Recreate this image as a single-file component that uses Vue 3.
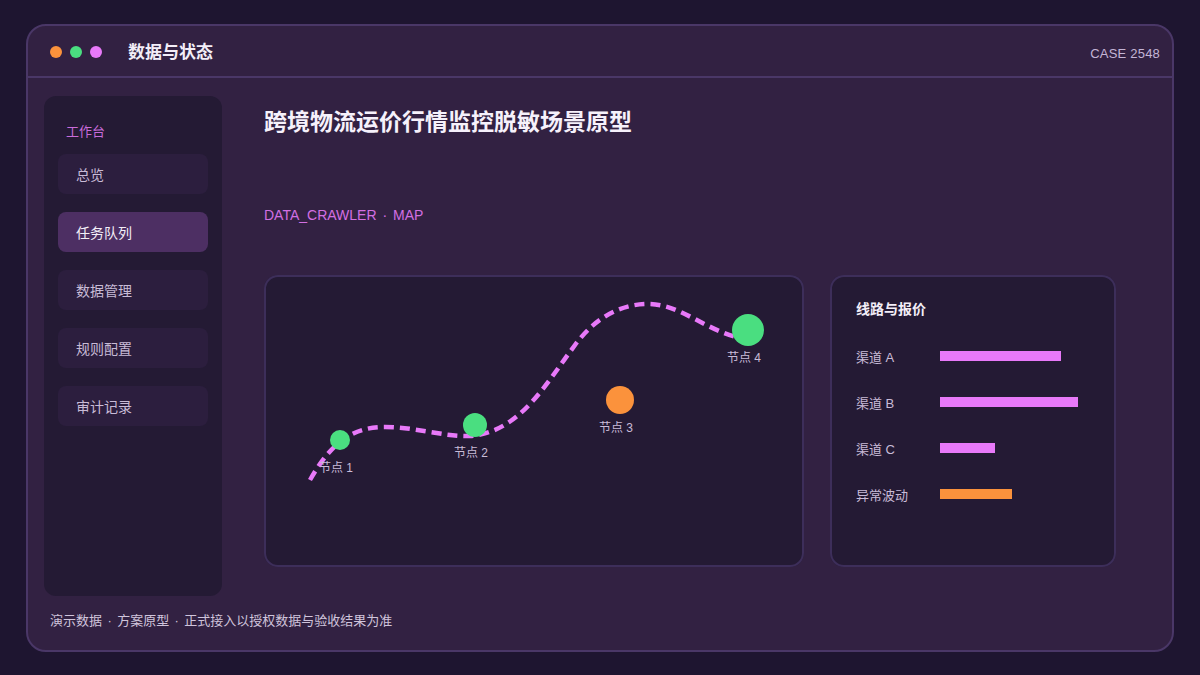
<script setup>
const navItems = [
  { label: '总览', active: false },
  { label: '任务队列', active: true },
  { label: '数据管理', active: false },
  { label: '规则配置', active: false },
  { label: '审计记录', active: false },
]
const nodes = [
  { label: '节点 1', x: 76, y: 165, r: 10, color: '#4ade80', ly: 185 },
  { label: '节点 2', x: 211, y: 150, r: 12, color: '#4ade80', ly: 170 },
  { label: '节点 3', x: 356, y: 125, r: 14, color: '#fb923c', ly: 145 },
  { label: '节点 4', x: 484, y: 55, r: 16, color: '#4ade80', ly: 75 },
]
const bars = [
  { label: '渠道 A', width: 121, color: '#e879f9' },
  { label: '渠道 B', width: 138, color: '#e879f9' },
  { label: '渠道 C', width: 55, color: '#e879f9' },
  { label: '异常波动', width: 72, color: '#fb923c' },
]
</script>

<template>
  <div class="page">
    <div class="window">
      <header class="titlebar">
        <div class="dots">
          <span class="dot orange"></span>
          <span class="dot green"></span>
          <span class="dot pink"></span>
        </div>
        <div class="app-title">数据与状态</div>
        <div class="case">CASE 2548</div>
      </header>
      <div class="body">
        <aside class="sidebar">
          <div class="side-label">工作台</div>
          <div
            v-for="item in navItems"
            :key="item.label"
            class="nav-item"
            :class="{ active: item.active }"
          >{{ item.label }}</div>
        </aside>
        <main class="main">
          <h1 class="headline">跨境物流运价行情监控脱敏场景原型</h1>
          <div class="sub">DATA_CRAWLER · MAP</div>
          <div class="panels">
            <section class="map">
              <svg class="map-svg" width="540" height="292" viewBox="0 0 540 292">
                <path
                  class="route"
                  d="M46 205 C66 170 86 152 121 152 C151 152 181 162 206 161 C256 157 281 110 311 70 C331 43 356 29 384 29 C416 29 441 55 476 63"
                />
                <circle
                  v-for="n in nodes"
                  :key="n.label"
                  :cx="n.x"
                  :cy="n.y"
                  :r="n.r"
                  :fill="n.color"
                />
              </svg>
              <span
                v-for="n in nodes"
                :key="n.label + 't'"
                class="node-label"
                :style="{ left: n.x - 21 + 'px', top: n.ly + 'px' }"
              >{{ n.label }}</span>
            </section>
            <section class="quotes">
              <h2 class="quotes-title">线路与报价</h2>
              <div class="rows">
                <div v-for="b in bars" :key="b.label" class="row">
                  <span class="row-label">{{ b.label }}</span>
                  <span class="bar" :style="{ width: b.width + 'px', background: b.color }"></span>
                </div>
              </div>
            </section>
          </div>
        </main>
      </div>
      <footer class="footer">演示数据 · 方案原型 · 正式接入以授权数据与验收结果为准</footer>
    </div>
  </div>
</template>

<style>
html, body { margin: 0; background: #1e1530; }
</style>

<style scoped>
.page {
  width: 1200px;
  height: 675px;
  box-sizing: border-box;
  padding: 24px 26px;
  background: #1e1530;
  font-family: "Liberation Sans", "Noto Sans CJK SC", sans-serif;
  overflow: hidden;
}
.window {
  height: 628px;
  box-sizing: border-box;
  background: #322142;
  border: 2px solid #4a3767;
  border-radius: 20px;
  display: flex;
  flex-direction: column;
}
.titlebar {
  height: 52px;
  box-sizing: border-box;
  flex: none;
  display: flex;
  align-items: center;
  padding: 2px 12px 0 22px;
  border-bottom: 2px solid #4a3767;
}
.dots { display: flex; gap: 8px; }
.dot { width: 12px; height: 12px; border-radius: 50%; }
.orange { background: #fb923c; }
.green { background: #4ade80; }
.pink { background: #e879f9; }
.app-title {
  margin-left: 26px;
  margin-top: 2px;
  font-size: 17px;
  line-height: 24px;
  font-weight: 600;
  color: #f3eef8;
}
.case {
  margin-left: auto;
  margin-top: 2px;
  font-size: 13px;
  letter-spacing: 0.2px;
  color: #c4b5d6;
}
.body {
  flex: none;
  display: flex;
  padding: 18px 0 0 16px;
}
.sidebar {
  width: 178px;
  height: 500px;
  box-sizing: border-box;
  background: #241a34;
  border-radius: 12px;
  padding: 26px 14px 0;
}
.side-label {
  font-size: 13px;
  line-height: 20px;
  margin-left: 8px;
  margin-bottom: 12px;
  color: #c96cdb;
}
.nav-item {
  height: 40px;
  width: 150px;
  box-sizing: border-box;
  margin-bottom: 18px;
  border-radius: 8px;
  padding-left: 18px;
  background: #2c1e3e;
  font-size: 14px;
  line-height: 42px;
  color: #c8bbd6;
}
.nav-item.active {
  background: #4d2f63;
  color: #f3eef8;
}
.main {
  padding-left: 42px;
  flex: 1;
}
.headline {
  margin: 0;
  padding-top: 9px;
  font-size: 23px;
  line-height: 34px;
  font-weight: 600;
  color: #f6f1fb;
}
.sub {
  margin-top: 66px;
  font-size: 14px;
  line-height: 20px;
  word-spacing: 2px;
  color: #d26fe2;
}
.panels {
  margin-top: 50px;
  display: flex;
  gap: 26px;
}
.map {
  position: relative;
  width: 540px;
  height: 292px;
  box-sizing: border-box;
  background: #241a34;
  border-radius: 14px;
  box-shadow: inset 0 0 0 2px #3d2e5a;
  flex: none;
}
.map-svg { position: absolute; left: 0; top: 0; display: block; }
.route {
  fill: none;
  stroke: #e879f9;
  stroke-width: 4.5;
  stroke-dasharray: 10 6;
}
.node-label {
  position: absolute;
  font-size: 12px;
  line-height: 16px;
  white-space: nowrap;
  color: #c9bcd8;
}
.quotes {
  width: 286px;
  height: 292px;
  box-sizing: border-box;
  background: #241a34;
  border-radius: 14px;
  box-shadow: inset 0 0 0 2px #3d2e5a;
  padding: 24px 26px 0;
  flex: none;
}
.quotes-title {
  margin: 0;
  font-size: 14px;
  line-height: 20px;
  font-weight: 600;
  color: #f3eef8;
}
.rows {
  margin-top: 28px;
  display: flex;
  flex-direction: column;
  gap: 26px;
}
.row {
  display: flex;
  align-items: center;
  height: 20px;
}
.row-label {
  width: 84px;
  padding-top: 2px;
  font-size: 13px;
  line-height: 20px;
  color: #c9bcd8;
}
.bar { height: 10px; margin-top: -2px; }
.footer {
  margin: 15px 0 0 22px;
  font-size: 13px;
  line-height: 20px;
  word-spacing: 1.8px;
  color: #d0c4dc;
}
</style>
